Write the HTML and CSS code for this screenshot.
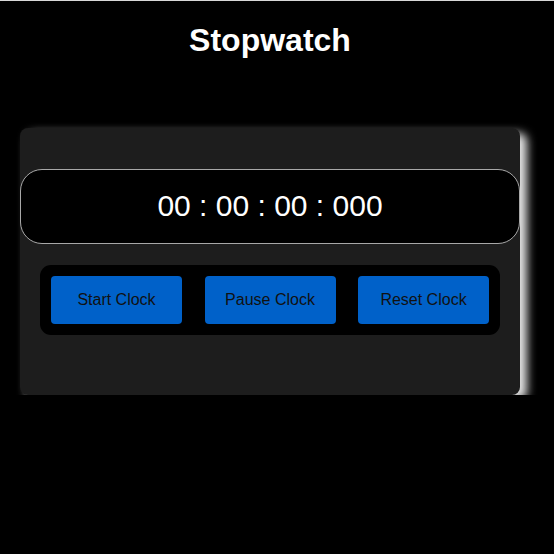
FILE: index.html
```html
<!DOCTYPE html>
<html>
<head>
<meta charset="utf-8">
<link rel="stylesheet" href="styles.css">
</head>
<body>
<div class="wrap">
  <h1 class="title">Stopwatch</h1>
  <div class="card">
    <div class="display">00 : 00 : 00 : 000</div>
    <div class="controls">
      <button class="btn">Start Clock</button>
      <button class="btn">Pause Clock</button>
      <button class="btn">Reset Clock</button>
    </div>
  </div>
</div>
</body>
</html>
```

FILE: styles.css
```css
html, body {
  background: #000;
}
body {
  margin: 0;
  border-top: 1px solid #d8d8d8;
  font-family: "Liberation Sans", Arial, sans-serif;
  color: #fff;
}
.wrap {
  width: 500px;
  margin-left: 20px;
}
.title {
  margin: 21px 0 0;
  font-size: 32px;
  font-weight: bold;
  line-height: 37px;
  text-align: center;
}
.card {
  margin-top: 69px;
  background: #1d1d1d;
  border-radius: 8px;
  padding: 41px 0 60px;
  box-shadow: 7px 5px 10px rgba(255, 255, 255, 0.9);
}
.display {
  height: 73px;
  box-sizing: border-box;
  height: 75px;
  padding-bottom: 2px;
  border: 1px solid #a8a8a8;
  border-radius: 22px;
  background: #000;
  display: flex;
  align-items: center;
  justify-content: center;
  font-size: 30px;
  color: #fff;
}
.controls {
  margin: 21px 20px 0;
  background: #000;
  border-radius: 11px;
  padding: 11px;
  display: flex;
  justify-content: space-between;
}
.btn {
  width: 131px;
  height: 48px;
  border: none;
  border-radius: 4px;
  background: #0061c9;
  color: #111;
  font-family: "Liberation Sans", Arial, sans-serif;
  font-size: 16px;
  padding: 0;
}
```
